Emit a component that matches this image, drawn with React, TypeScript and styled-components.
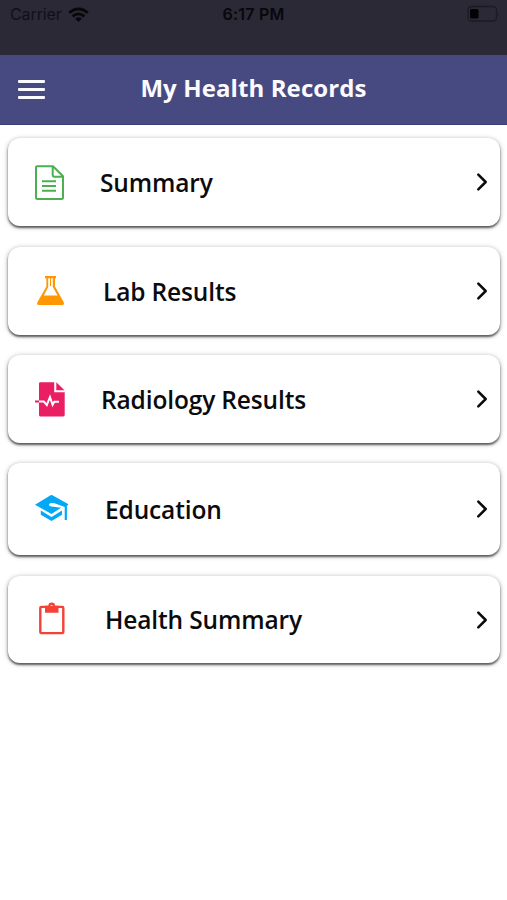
import React from "react";
import styled, { createGlobalStyle } from "styled-components";

const GlobalStyle = createGlobalStyle`
  * { box-sizing: border-box; }
  body { margin: 0; background: #fff; font-family: "Open Sans", sans-serif; }
`;

const Screen = styled.main`
  width: 100%;
  max-width: 507px;
  min-height: 900px;
  background: #fff;
`;

const StatusBar = styled.div`
  height: 55px;
  padding: 5px 8px 0 10px;
  background: #2a2935;
  color: #07070c;
  display: grid;
  grid-template-columns: 1fr auto 1fr;
  align-items: start;
  font: 400 16px/19px Inter, sans-serif;
`;

const Carrier = styled.div`
  display: flex;
  align-items: center;
  gap: 6px;
  letter-spacing: -0.1px;
  color: #101017;
`;

const Clock = styled.div`
  font-weight: 600;
  letter-spacing: 0.25px;
  margin-right: 2px;
`;

const Battery = styled.svg`
  justify-self: end;
  display: block;
`;

const Header = styled.header`
  height: 70px;
  padding: 0 18px;
  background: #474a81;
  border-bottom: 1px solid #3b3d72;
  color: #fafaff;
  display: grid;
  grid-template-columns: 27px 1fr 27px;
  align-items: center;
`;

const Title = styled.h1`
  margin: 0;
  padding-bottom: 3px;
  text-align: center;
  white-space: nowrap;
  font-size: 24px;
  line-height: 34px;
  font-weight: 700;
  letter-spacing: 0.1px;
`;

const MenuButton = styled.button`
  border: 0;
  padding: 0;
  background: none;
  display: flex;
  flex-direction: column;
  gap: 5px;
`;

const MenuLine = styled.span`
  height: 3px;
  border-radius: 1px;
  background: #fafaff;
`;

const List = styled.nav`
  padding: 13px 7px 0 8px;
  display: flex;
  flex-direction: column;
`;

const Card = styled.a<{ $height: number; $gap: number }>`
  height: ${(p) => p.$height}px;
  margin-bottom: ${(p) => p.$gap}px;
  padding: 0 12px 0 22px;
  border-radius: 12px;
  background: #fff;
  box-shadow: 0 2px 2px rgba(0, 0, 0, 0.52), 0 1px 5px rgba(0, 0, 0, 0.36);
  display: flex;
  align-items: center;
  color: #0b0b0d;
`;

const Icon = styled.svg`
  width: 40px;
  height: 40px;
  flex: none;
`;

const Label = styled.span<{ $indent: number }>`
  flex: 1;
  margin-left: ${(p) => p.$indent}px;
  padding-top: 1px;
  font-size: 24.5px;
  line-height: 34px;
  font-weight: 600;
  letter-spacing: -0.14px;
  white-space: nowrap;
`;

const Chevron = styled.svg`
  flex: none;
  display: block;
`;

const SummaryIcon = () => (
  <Icon viewBox="0 0 40 40" fill="none" stroke="#4caf50" strokeWidth="2" strokeLinejoin="round">
    <path d="M7 4.2H23L33 14.2V35.5Q33 37 31.5 37H7.5Q6 37 6 35.5V5.5Q6 4.2 7 4.2Z" />
    <path d="M22.7 4.2V13Q22.7 14.8 24.5 14.8H33M12 19.2H26M12 24H26M12 28.8H26" />
  </Icon>
);

const LabIcon = () => (
  <Icon viewBox="0 0 40 40" fill="#ff9800">
    <path
      fillRule="evenodd"
      d="M15 5H26V7.2H25V15.5L33.6 31Q34.8 34 32.3 34H8.8Q6.2 34 7.5 31L16.4 15.5V7.2H15ZM18.2 7.2V16L13.8 24.6H27.6L22.8 16V7.2Z"
    />
    <path d="M20 7H21.1V15H20Z" />
  </Icon>
);

const RadiologyIcon = () => (
  <Icon viewBox="0 0 40 40" fill="#e91e63">
    <path d="M10.3 3.3H24.2V13.2H34.7V36Q34.7 37.4 33.3 37.4H10.3Q9 37.4 9 36V4.6Q9 3.3 10.3 3.3Z" />
    <path d="M26.3 3.3L34.5 11.3H26.3Z" />
    <path d="M5 22.5H9" stroke="#e91e63" strokeWidth="2" />
    <path d="M9 22.5H13.8L16.8 26L20 18.2L22.6 25.8L24.3 22.7H29" fill="none" stroke="#fff" strokeWidth="2" />
  </Icon>
);

const EducationIcon = () => (
  <Icon viewBox="0 0 40 40" fill="#03a9f4">
    <path d="M5 15.7L20.6 6.2Q21.5 5.8 22.4 6.2L38.5 15.3L36.9 17V31H34.7V18L24.5 14.3Q20.2 13.3 19 15.3Q18.7 17.3 21.5 17.6L31 18.8L21.5 25Z" />
    <path d="M10.8 21.5L21.5 28L32 21.5V25.8L21.5 32L10.8 25.8Z" />
  </Icon>
);

const ClipboardIcon = () => (
  <Icon viewBox="0 0 40 40" fill="none" stroke="#f44336" strokeWidth="2.4" strokeLinejoin="round">
    <rect x="10.3" y="6.9" width="23" height="26.2" rx="1" />
    <path
      d="M15 5.8H18.3A3.4 3.4 0 0 1 25.1 5.8H28.5V12.7H15ZM21.7 4.9A1.4 1.4 0 1 0 21.7 7.7A1.4 1.4 0 1 0 21.7 4.9Z"
      fill="#f44336"
      stroke="none"
      fillRule="evenodd"
    />
  </Icon>
);

const records = [
  { label: "Summary", Glyph: SummaryIcon, height: 88, gap: 21, indent: 30 },
  { label: "Lab Results", Glyph: LabIcon, height: 88, gap: 20, indent: 33 },
  { label: "Radiology Results", Glyph: RadiologyIcon, height: 88, gap: 20, indent: 31 },
  { label: "Education", Glyph: EducationIcon, height: 92, gap: 21, indent: 35 },
  { label: "Health Summary", Glyph: ClipboardIcon, height: 87, gap: 0, indent: 35 },
];

export default function App() {
  return (
    <>
      <GlobalStyle />
      <Screen>
        <StatusBar>
          <Carrier>
            Carrier
            <svg width="21" height="16" viewBox="0 0 21 16" fill="none" stroke="#07070c" strokeWidth="2.8">
              <path d="M1.2 5.8Q10.5 -2 19.8 5.8M4.6 9.4Q10.5 4.4 16.4 9.4" />
              <path d="M7.1 11.6Q10.5 8.8 13.9 11.6L10.5 15Z" fill="#07070c" stroke="none" />
            </svg>
          </Carrier>
          <Clock>6:17 PM</Clock>
          <Battery width="32" height="18" viewBox="0 0 32 18">
            <rect x="1" y="1.5" width="28.5" height="14.5" rx="3.5" fill="none" stroke="#1c1b25" strokeWidth="1.3" />
            <rect x="3" y="4" width="8.5" height="9.5" rx="1.5" fill="#030306" />
            <path d="M30.7 6.5Q32.5 8.7 30.7 11Z" fill="#1c1b25" />
          </Battery>
        </StatusBar>
        <Header>
          <MenuButton aria-label="Menu">
            <MenuLine />
            <MenuLine />
            <MenuLine />
          </MenuButton>
          <Title>My Health Records</Title>
        </Header>
        <List>
          {records.map(({ label, Glyph, height, gap, indent }) => (
            <Card key={label} $height={height} $gap={gap}>
              <Glyph />
              <Label $indent={indent}>{label}</Label>
              <Chevron width="12" height="20" viewBox="0 0 12 20" fill="none" stroke="#0b0b0d" strokeWidth="2.5">
                <path d="M2.3 2.6L9.7 10L2.3 17.4" strokeLinecap="round" strokeLinejoin="round" />
              </Chevron>
            </Card>
          ))}
        </List>
      </Screen>
    </>
  );
}
